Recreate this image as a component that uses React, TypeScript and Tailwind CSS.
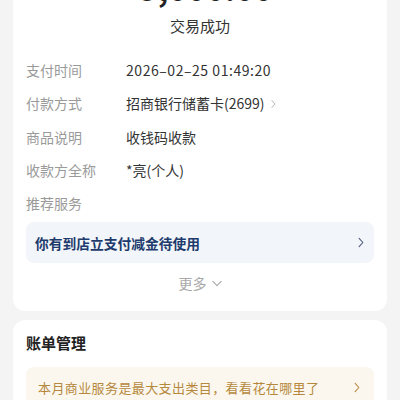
import React from "react";

const font = { fontFamily: '"Noto Sans CJK SC", "Noto Sans", sans-serif' };

function Chevron({ className }: { className?: string }) {
  return (
    <svg viewBox="0 0 8 14" className={className} fill="none" stroke="currentColor" strokeWidth="1.4" strokeLinecap="round" strokeLinejoin="round">
      <path d="M1.5 1.5 L6.5 7 L1.5 12.5" />
    </svg>
  );
}

export default function App() {
  const rows: [string, React.ReactNode][] = [
    ["支付时间", <span className="tracking-[0.55px]">2026–02–25 01:49:20</span>],
    [
      "付款方式",
      <span className="flex items-center gap-[6px]">
        招商银行储蓄卡(2699)
        <Chevron className="w-[5px] h-[10px] text-[#aaaaaa]" />
      </span>,
    ],
    ["商品说明", "收钱码收款"],
    ["收款方全称", "*亮(个人)"],
    ["推荐服务", ""],
  ];
  return (
    <div className="w-[400px] h-[400px] overflow-hidden bg-[#f4f4f4] px-[13px]" style={font}>
      <div className="bg-white rounded-b-[12px] px-[13px] pb-[8px]">
        <div className="mt-[-33px] h-[40px] text-center text-[32px] leading-[40px] font-bold text-[#222]">
          -5,000.00
        </div>
        <div className="mt-[5px] h-[28px] flex items-center justify-center text-[15px] text-[#333]">交易成功</div>
        <div className="mt-[14px]">
          {rows.map(([k, v], i) => (
            <div key={i} className="h-[33.3px] flex items-center text-[14px]">
              <div className="w-[100px] text-[#9a9a9a]">{k}</div>
              <div className="text-[#333]">{v}</div>
            </div>
          ))}
        </div>
        <div className="mt-[2px] h-[41px] rounded-[8px] bg-[#f2f5fa] flex items-center justify-between pl-[9px] pr-[10px]">
          <span className="text-[13.75px] font-bold text-[#1d3b6c]">你有到店立支付减金待使用</span>
          <Chevron className="w-[6px] h-[11px] text-[#4a5a78]" />
        </div>
        <div className="h-[40px] flex items-center justify-center gap-[5px] text-[14px] text-[#a8a8a8]">
          更多
          <svg viewBox="0 0 12 8" className="w-[10px] h-[7px]" fill="none" stroke="currentColor" strokeWidth="1.3" strokeLinecap="round" strokeLinejoin="round">
            <path d="M1 1.5 L6 6.5 L11 1.5" />
          </svg>
        </div>
      </div>
      <div className="mt-[9px] bg-white rounded-[12px] px-[13px] pt-[11px] pb-[12px]">
        <div className="h-[24px] flex items-center text-[15px] font-bold text-[#222]">账单管理</div>
        <div className="mt-[12px] h-[40px] rounded-[8px] bg-[#fcf7ee] flex items-center justify-between pl-[12px] pr-[14px]">
          <span className="text-[13px] tracking-[0.4px] text-[#b5883d]">本月商业服务是最大支出类目，看看花在哪里了</span>
          <Chevron className="w-[6px] h-[11px] text-[#b5883d]" />
        </div>
      </div>
    </div>
  );
}
